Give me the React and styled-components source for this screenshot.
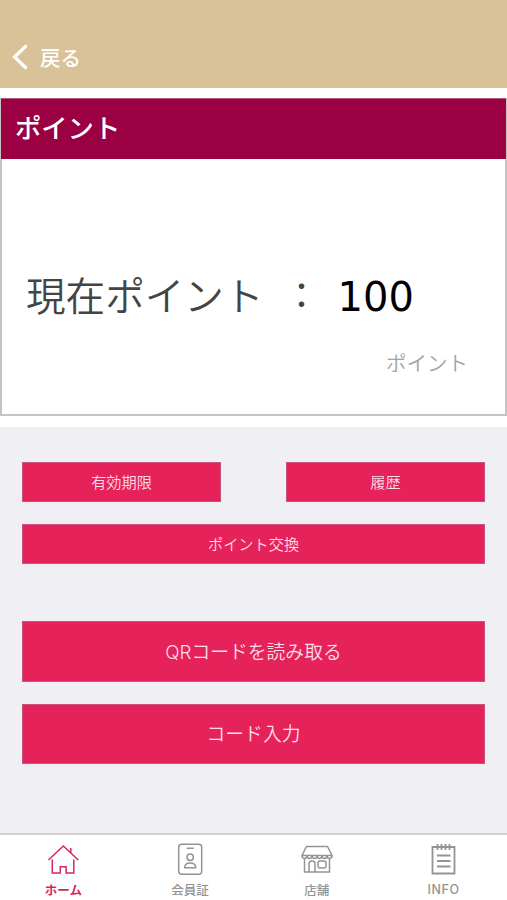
import React from 'react';
import styled, { createGlobalStyle } from 'styled-components';

const GlobalStyle = createGlobalStyle`
  * { box-sizing: border-box; }
  body {
    margin: 0;
    background: #fff;
    font-family: "Noto Sans CJK JP", "Liberation Sans", sans-serif;
  }
  button { font-family: inherit; margin: 0; padding: 0; border: 0; background: none; }
`;

const Screen = styled.div`
  display: flex;
  flex-direction: column;
  width: 100%;
  height: 900px;
  overflow: hidden;
  background: #fff;
`;

const NavBar = styled.header`
  flex: none;
  height: 88px;
  padding: 27px 0 0 12px;
  background: #d9c297;
  border-bottom: 1px solid #d2c3a8;
`;

const BackButton = styled.button`
  display: flex;
  align-items: center;
  gap: 11px;
  height: 60px;
  color: #fff;
  font-size: 20.5px;
  font-weight: 500;
  line-height: 30px;
`;

const BackLabel = styled.span`
  padding-bottom: 1px;
`;

const Card = styled.section`
  flex: none;
  height: 318px;
  margin: 10px 0 11px;
  border: solid #c4c4c4;
  border-width: 0 2px 2px;
`;

const CardTitle = styled.h1`
  height: 61px;
  margin: 0 -1px;
  padding-left: 14px;
  background: #9b0042;
  border-top: 1px solid #b75880;
  color: #fff;
  font-size: 26.3px;
  font-weight: 500;
  line-height: 56px;
`;

const Balance = styled.div`
  display: flex;
  align-items: center;
  height: 60px;
  margin-top: 105px;
  padding-left: 24px;
  color: #444;
  font-size: 39.6px;
  font-weight: 350;
  line-height: 60px;
`;

const Colon = styled.span`
  margin: 0 2px 2px 20px;
  font-size: 36px;
  font-weight: 400;
`;

const Amount = styled.strong`
  margin-left: 16px;
  padding-top: 5px;
  color: #000;
  font-family: "DejaVu Sans", sans-serif;
  font-size: 40px;
  font-weight: 400;
`;

const Unit = styled.div`
  margin-top: 23px;
  padding-right: 37px;
  color: #a3a3a3;
  font-size: 20.5px;
  font-weight: 350;
  line-height: 30px;
  text-align: right;
`;

const Actions = styled.main`
  flex: 1;
  display: grid;
  grid-template-columns: 199px 199px;
  grid-auto-rows: max-content;
  justify-content: space-between;
  row-gap: 22px;
  padding: 35px 22px 0;
  background: #efeff4;
`;

const ActionButton = styled.button`
  grid-column: ${({ $wide }) => ($wide ? '1 / -1' : 'auto')};
  height: ${({ $large }) => ($large ? 60.5 : 40)}px;
  margin-top: ${({ $spaced }) => ($spaced ? 35 : 0)}px;
  padding-top: ${({ $large }) => ($large ? 3 : 2)}px;
  background: #e6225b;
  border: 1px solid #c9537c;
  color: #ffdce7;
  font-family: Inter, "Noto Sans CJK JP", sans-serif;
  font-size: ${({ $large }) => ($large ? 18.8 : 15.2)}px;
  font-weight: 350;
  line-height: 1.4;
`;

const TabBar = styled.nav`
  flex: none;
  display: grid;
  grid-template-columns: repeat(4, 1fr);
  height: 67px;
  background: #fff;
  border-top: 2px solid #d2d2d6;
`;

const Tab = styled.button`
  display: flex;
  flex-direction: column;
  align-items: center;
  padding-top: 7px;
  color: ${({ $active }) => ($active ? '#d4285c' : '#949494')};
  font-size: 12.5px;
  font-weight: ${({ $active }) => ($active ? 700 : 500)};
  font-family: ${({ $latin }) => ($latin ? 'Inter, sans-serif' : 'inherit')};
  letter-spacing: ${({ $latin }) => ($latin ? '0.6px' : '0')};
  line-height: 18px;
`;

const TabIcon = styled.svg`
  display: block;
  width: 34px;
  height: 34px;
  margin-bottom: 5px;
  fill: none;
  stroke: currentColor;
  stroke-width: 1.5;
`;

const HomeIcon = () => (
  <TabIcon viewBox="0 0 34 34">
    <path d="M2.5 18 17.3 4l15 14M24.8 11V6M6.3 17.5V31h8v-6.3h5.8V31h7.7V17.5" />
  </TabIcon>
);

const MemberIcon = () => (
  <TabIcon viewBox="0 0 34 34">
    <rect x="5.7" y="2.3" width="23" height="30" rx="3" />
    <path d="M13.7 6.3h7M11.7 25.7c0-3.2 2-4.8 5.5-4.8s5.5 1.6 5.5 4.8Z" />
    <circle cx="17.2" cy="15.3" r="3.2" />
  </TabIcon>
);

const StoreIcon = () => (
  <TabIcon viewBox="0 0 34 34">
    <path d="M6.5 4.5h21L32 13.5H2ZM2 13.5c0 4 5 4 5 0 0 4 5 4 5 0 0 4 5 4 5 0 0 4 5 4 5 0 0 4 5 4 5 0 0 4 5 4 5 0M4.5 16.5V30h25V16.5M9 30v-8.5c0-3.5 6-3.5 6 0V30" />
    <rect x="18" y="19" width="8" height="7" rx="2" />
  </TabIcon>
);

const InfoIcon = () => (
  <TabIcon viewBox="0 0 34 34">
    <path d="M5.5 5h22v26.5h-22ZM10.5 2v6M14.5 2v6M18.5 2v6M22.5 2v6M10 13.5h13.5M10 19h13.5M10 24.5h13.5" strokeWidth="1.8" />
  </TabIcon>
);

const ChevronIcon = styled.svg`
  width: 17px;
  height: 26px;
  fill: none;
  stroke: #fff;
  stroke-width: 3.2;
`;

const tabs = [
  { label: 'ホーム', Icon: HomeIcon, active: true },
  { label: '会員証', Icon: MemberIcon },
  { label: '店舗', Icon: StoreIcon },
  { label: 'INFO', Icon: InfoIcon, latin: true },
];

export default function App() {
  return (
    <Screen>
      <GlobalStyle />
      <NavBar>
        <BackButton>
          <ChevronIcon viewBox="0 0 17 26">
            <path d="M14.5 1.5 2.5 13l12 11.5" />
          </ChevronIcon>
          <BackLabel>戻る</BackLabel>
        </BackButton>
      </NavBar>
      <Card>
        <CardTitle>ポイント</CardTitle>
        <Balance>
          <span>現在ポイント</span>
          <Colon>：</Colon>
          <Amount>100</Amount>
        </Balance>
        <Unit>ポイント</Unit>
      </Card>
      <Actions>
        <ActionButton>有効期限</ActionButton>
        <ActionButton>履歴</ActionButton>
        <ActionButton $wide>ポイント交換</ActionButton>
        <ActionButton $wide $large $spaced>QRコードを読み取る</ActionButton>
        <ActionButton $wide $large>コード入力</ActionButton>
      </Actions>
      <TabBar>
        {tabs.map(({ label, Icon, active, latin }) => (
          <Tab key={label} $active={active} $latin={latin}>
            <Icon />
            {label}
          </Tab>
        ))}
      </TabBar>
    </Screen>
  );
}
